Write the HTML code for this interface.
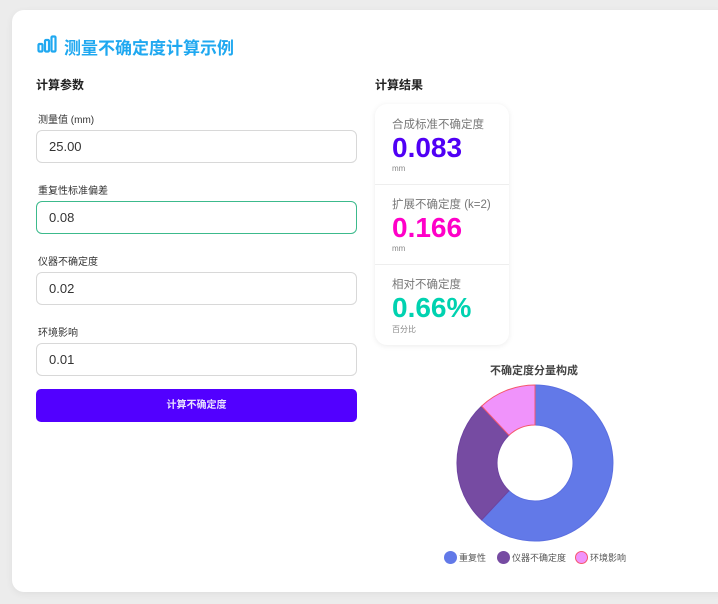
<!DOCTYPE html>
<html><head><meta charset="utf-8"><style>
*{margin:0;padding:0;box-sizing:border-box}
body{width:718px;height:604px;background:#ececec;font-family:"Liberation Sans","Noto Sans CJK SC",sans-serif;position:relative;overflow:hidden}
.card{position:absolute;left:12px;top:10px;width:720px;height:582px;background:#fff;border-radius:12px;box-shadow:0 2px 8px rgba(0,0,0,.06)}
.a{position:absolute}
.title{left:64px;top:34px;font-size:17px;font-weight:bold;color:#1fa8f0}
.h{font-size:12px;font-weight:bold;color:#222}
.lbl{font-size:10px;color:#333;left:38px}
.in{left:36px;width:321px;height:33px;border:1px solid #d8d8d8;border-radius:6px;font-size:13px;color:#333;padding-left:12px;line-height:31px}
.btn{left:36px;top:389px;width:321px;height:33px;background:#5200ff;border-radius:5px;color:#e8e0ff;font-size:10px;font-weight:bold;text-align:center;line-height:33px}
.res{left:375px;top:104px;width:134px;height:241px;border-radius:12px;box-shadow:0 1px 6px rgba(0,0,0,.08);background:#fff}
.it{position:absolute;left:0;width:134px;padding-left:17px}
.it .t{font-size:11.5px;color:#777}
.it .v{font-size:28px;font-weight:bold;line-height:30px;margin-top:1px}
.it .u{font-size:8px;color:#888;margin-top:1px}
.sep{position:absolute;left:0;width:134px;height:1px;background:#eee}
.leg{font-size:9px;color:#555;top:551px}
.dot{position:absolute;width:13px;height:13px;border-radius:50%;top:551px}
</style></head><body>
<div class="card"></div>
<svg class="a" style="left:37px;top:35px" width="20" height="18" viewBox="0 0 20 18"><g fill="none" stroke="#1fa8f0" stroke-width="2.2" stroke-linejoin="round"><rect x="1.5" y="9" width="4" height="7.5" rx="1"/><rect x="8" y="5" width="4" height="11.5" rx="1"/><rect x="14.5" y="1.5" width="4" height="15" rx="1"/></g></svg>
<div class="a title">测量不确定度计算示例</div>
<div class="a h" style="left:36px;top:76px">计算参数</div>
<div class="a h" style="left:375px;top:76px">计算结果</div>
<div class="a lbl" style="top:111px">测量值 (mm)</div>
<div class="a in" style="top:130px">25.00</div>
<div class="a lbl" style="top:182px">重复性标准偏差</div>
<div class="a in" style="top:201px;border-color:#3cba8c">0.08</div>
<div class="a lbl" style="top:253px">仪器不确定度</div>
<div class="a in" style="top:272px">0.02</div>
<div class="a lbl" style="top:324px">环境影响</div>
<div class="a in" style="top:343px">0.01</div>
<div class="a btn">计算不确定度</div>
<div class="a res">
<div class="it" style="top:12px"><div class="t">合成标准不确定度</div><div class="v" style="color:#5000f5">0.083</div><div class="u">mm</div></div>
<div class="sep" style="top:80px"></div>
<div class="it" style="top:92px"><div class="t">扩展不确定度 (k=2)</div><div class="v" style="color:#ff00c8">0.166</div><div class="u">mm</div></div>
<div class="sep" style="top:160px"></div>
<div class="it" style="top:172px"><div class="t">相对不确定度</div><div class="v" style="color:#00d2b0">0.66%</div><div class="u">百分比</div></div>
</div>
<div class="a" style="left:490px;top:362px;font-size:11px;font-weight:bold;color:#444">不确定度分量构成</div>
<svg class="a" style="left:0;top:0" width="718" height="604">
<path d="M535 385 A78 78 0 1 1 481.6 519.9 L509 490.7 A38 38 0 1 0 535 425Z" fill="#6279e8" stroke="#5b6fe0" stroke-width="1"/>
<path d="M481.6 519.9 A78 78 0 0 1 481.6 406.1 L509 435.3 A38 38 0 0 0 509 490.7Z" fill="#764ba2" stroke="#6e44a0" stroke-width="1"/>
<path d="M481.6 406.1 A78 78 0 0 1 535 385 L535 425 A38 38 0 0 0 509 435.3Z" fill="#f093fb" stroke="#f5576c" stroke-width="1"/>
</svg>
<div class="dot" style="left:444px;background:#6279e8"></div><div class="a leg" style="left:459px">重复性</div>
<div class="dot" style="left:497px;background:#764ba2"></div><div class="a leg" style="left:512px">仪器不确定度</div>
<div class="dot" style="left:575px;background:#f093fb;border:1.5px solid #f5576c"></div><div class="a leg" style="left:590px">环境影响</div>
</body></html>
